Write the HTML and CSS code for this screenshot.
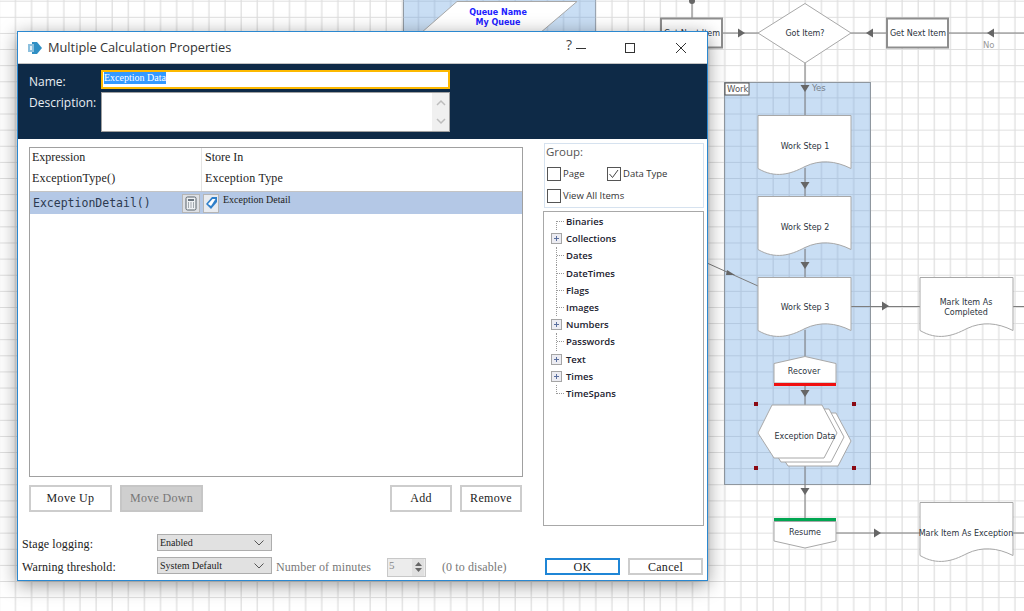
FILE: index.html
```html
<!DOCTYPE html>
<html lang="en">
  <head>
    <meta charset="UTF-8" />
    <title>Multiple Calculation Properties</title>
    <link rel="stylesheet" href="styles.css">
  </head>
  <body>
    <!-- flow diagram behind the dialog -->
    <svg class="canvas" width="1024" height="611" viewBox="0 0 1024 611">
      <defs>
        <pattern id="grid" width="16.12" height="16.12" x="3" y="0.7" patternUnits="userSpaceOnUse">
          <path class="grid-line" d="M12.5 0V16.12M0 0.3H16.12" />
        </pattern>
        <pattern id="gridblue" width="16.12" height="16.12" x="3" y="0.7" patternUnits="userSpaceOnUse">
          <path class="grid-line-blue" d="M12.5 0V16.12M0 0.3H16.12" />
        </pattern>
        <path id="doc" d="M0 0H93V53C77 45 62 44 47 51C32 59 17 63 0 53Z" />
        <path id="hex" d="M0 29L14 1H64L79 29L66 54H16Z" />
        <path id="adown" d="M-4.500 -4H4.500L0 3Z" />
        <path id="aright" d="M-3 -4.500L4 0L-3 4.500Z" />
        <path id="aleft" d="M3 -4.500L-4 0L3 4.500Z" />
      </defs>
      <rect width="1024" height="611" fill="#fff" />
      <rect width="1024" height="611" fill="url(#grid)" />

      <rect class="block" x="403.500" y="-2" width="192" height="36" />
      <rect x="403.500" y="-2" width="192" height="36" fill="url(#gridblue)" />
      <rect class="block" x="724.500" y="82.500" width="146" height="402" />
      <rect x="725" y="83" width="145" height="401" fill="url(#gridblue)" />

      <path class="link" d="M692 0V18M722 33H758M851 33H887M948 33H1024M805 63V115M805 168V196M805 249V277M805 330V356M707 263L758 286M851 306.500H920M1012 306.500H1024M805 386V405M805 466V518M836 533H920M1012 533H1024" />
      <circle class="arrow" cx="692" cy="1" r="3" />
      <use class="arrow" href="#aright" x="741" y="33" />
      <use class="arrow" href="#aleft" x="870" y="33" />
      <use class="arrow" href="#aleft" x="991" y="33" />
      <use class="arrow" href="#adown" x="805" y="89" />
      <use class="arrow" href="#adown" x="805" y="186" />
      <use class="arrow" href="#adown" x="805" y="266" />
      <use class="arrow" href="#adown" x="805" y="394" />
      <use class="arrow" href="#adown" x="805" y="492" />
      <use class="arrow" href="#aright" x="885" y="306" />
      <use class="arrow" href="#aright" x="877" y="533" />
      <path class="arrow" d="M727 270L735 275L726 275Z" />

      <path class="shape" d="M457 1.500H577L540 33H421Z" />
      <text class="queue" x="498" y="15">Queue Name</text>
      <text class="queue" x="498" y="25">My Queue</text>

      <rect class="box" x="661" y="18.500" width="61" height="29" />
      <text class="label" x="692" y="36">Get Next Item</text>
      <path class="shape" d="M758 33L805 3.500L851 33L805 63Z" />
      <text class="label" x="805" y="36">Got Item?</text>
      <rect class="box" x="887" y="18.500" width="61" height="29" />
      <text class="label" x="918" y="36">Get Next Item</text>
      <text class="note" x="983" y="48">No</text>
      <text class="note note-dark" x="812" y="91">Yes</text>

      <rect class="tag" x="725" y="83" width="24" height="12" />
      <text class="tag-text" x="727" y="92">Work</text>

      <use class="shape" href="#doc" x="758" y="115.500" />
      <text class="label" x="805" y="149">Work Step 1</text>
      <use class="shape" href="#doc" x="758" y="196.500" />
      <text class="label" x="805" y="230">Work Step 2</text>
      <use class="shape" href="#doc" x="758" y="277.500" />
      <text class="label" x="805" y="310">Work Step 3</text>
      <use class="shape" href="#doc" x="920" y="277.500" />
      <text class="label" x="966" y="305">Mark Item As</text>
      <text class="label" x="966" y="315">Completed</text>
      <use class="shape" href="#doc" x="920" y="502.500" />
      <text class="label" x="966" y="536">Mark Item As Exception</text>

      <path class="shape" d="M774 363.500L805 356.500L836 363.500V383H774Z" />
      <rect x="774" y="383" width="62" height="3" fill="#f01010" />
      <text class="label" x="804" y="374">Recover</text>

      <use class="shape" href="#hex" x="772" y="412" />
      <use class="shape" href="#hex" x="765" y="408" />
      <use class="shape" href="#hex" x="758" y="404" />
      <text class="label" x="805" y="439">Exception Data</text>
      <rect class="grip" x="754" y="402" width="4" height="4" />
      <rect class="grip" x="852" y="402" width="4" height="4" />
      <rect class="grip" x="754" y="466" width="4" height="4" />
      <rect class="grip" x="852" y="466" width="4" height="4" />

      <rect x="774" y="518" width="62" height="3" fill="#00a651" />
      <path class="shape" d="M774 521.500H836V541L805 548L774 541Z" />
      <text class="label" x="805" y="535">Resume</text>
    </svg>

    <div class="dialog">
      <div class="titlebar">
        <svg class="app-icon" width="16" height="14" viewBox="0 0 16 14">
          <path d="M5 1H10L15 7L10 13H5Z" fill="#2f8fc4" />
          <rect x="1" y="3" width="6" height="8" fill="#8cc0de" />
          <rect x="3" y="5" width="2" height="4" fill="#e4f0f7" />
        </svg>
        <span class="title">Multiple Calculation Properties</span>
        <span class="help">?</span>
        <svg class="winbtn btn-min" width="12" height="12" viewBox="0 0 12 12"><path d="M1 6.500H11" /></svg>
        <svg class="winbtn btn-max" width="12" height="12" viewBox="0 0 12 12"><rect x="1.500" y="1.500" width="9" height="9" /></svg>
        <svg class="winbtn btn-close" width="12" height="12" viewBox="0 0 12 12"><path d="M1 1L11 11M11 1L1 11" /></svg>
      </div>

      <div class="head">
        <label class="head-label name-label">Name:</label>
        <div class="name-input"><span class="selected">Exception Data</span></div>
        <label class="head-label">Description:</label>
        <div class="desc-input">
          <div class="desc-scroll">
            <svg width="12" height="8" viewBox="0 0 12 8"><path d="M2 6L6 2L10 6" /></svg>
            <svg width="12" height="8" viewBox="0 0 12 8"><path d="M2 2L6 6L10 2" /></svg>
          </div>
        </div>
      </div>

      <div class="body">
        <div class="left">
          <div class="table">
            <div class="row row-head">
              <div class="cell first">Expression</div>
              <div class="cell">Store In</div>
            </div>
            <div class="row">
              <div class="cell first spaced">ExceptionType()</div>
              <div class="cell spaced">Exception Type</div>
            </div>
            <div class="row row-selected">
              <div class="cell-expr">
                <span class="mono">ExceptionDetail()</span>
                <span class="cell-btn">
                  <svg width="12" height="15" viewBox="0 0 12 15">
                    <rect x="1" y="1" width="10" height="13" rx="1.500" fill="#eef1f4" stroke="#59626b" />
                    <rect x="3" y="3" width="6" height="2" fill="#6c7680" />
                    <path d="M3 7H4M5.500 7H6.500M8 7H9M3 9H4M5.500 9H6.500M8 9H9M3 11H4M5.500 11H6.500M8 11H9" stroke="#59626b" />
                  </svg>
                </span>
              </div>
              <div class="cell-store">
                <span class="cell-btn tag-btn">
                  <svg width="13" height="14" viewBox="0 0 13 14">
                    <path d="M1 8L7 1H12V6L6 13Z" fill="#2f7fc9" />
                    <path d="M3 8L7.500 3H10.500L6 10Z" fill="#fff" />
                  </svg>
                </span>
                <span class="store-text">Exception Detail</span>
              </div>
            </div>
          </div>
          <div class="actions">
            <button class="btn btn-move">Move Up</button>
            <button class="btn btn-move btn-off">Move Down</button>
            <button class="btn btn-add">Add</button>
            <button class="btn btn-add">Remove</button>
          </div>
        </div>

        <div class="right">
          <div class="group">
            <div class="group-title">Group:</div>
            <div class="group-row">
              <span class="check"></span><span class="check-text page">Page</span>
              <span class="check">
                <svg width="14" height="14" viewBox="0 0 14 14"><path d="M2.500 7L5.500 10.500L11 3" /></svg>
              </span><span class="check-text">Data Type</span>
            </div>
            <div class="group-row">
              <span class="check"></span><span class="check-text">View All Items</span>
            </div>
          </div>
          <div class="tree">
            <div class="node"><i class="twig"></i>Binaries</div>
            <div class="node"><i class="twig plus"></i>Collections</div>
            <div class="node"><i class="twig"></i>Dates</div>
            <div class="node"><i class="twig"></i>DateTimes</div>
            <div class="node"><i class="twig"></i>Flags</div>
            <div class="node"><i class="twig"></i>Images</div>
            <div class="node"><i class="twig plus"></i>Numbers</div>
            <div class="node"><i class="twig"></i>Passwords</div>
            <div class="node"><i class="twig plus"></i>Text</div>
            <div class="node"><i class="twig plus"></i>Times</div>
            <div class="node"><i class="twig last"></i>TimeSpans</div>
          </div>
        </div>
      </div>

      <div class="footer">
        <div class="foot-row">
          <span class="foot-label">Stage logging:</span>
          <div class="select">Enabled<svg width="12" height="8" viewBox="0 0 12 8"><path d="M1.500 1.500L6 6L10.500 1.500" /></svg></div>
        </div>
        <div class="foot-row">
          <span class="foot-label">Warning threshold:</span>
          <div class="select">System Default<svg width="12" height="8" viewBox="0 0 12 8"><path d="M1.500 1.500L6 6L10.500 1.500" /></svg></div>
          <span class="muted minutes">Number of minutes</span>
          <div class="spin">5
            <div class="spin-arrows">
              <svg width="9" height="6" viewBox="0 0 9 6"><path d="M1 5L4.500 1L8 5Z" /></svg>
              <svg width="9" height="6" viewBox="0 0 9 6"><path d="M1 1L4.500 5L8 1Z" /></svg>
            </div>
          </div>
          <span class="muted disable">(0 to disable)</span>
          <button class="btn btn-ok">OK</button>
          <button class="btn btn-cancel">Cancel</button>
        </div>
      </div>
    </div>
  </body>
</html>
```

FILE: styles.css
```css
body {
  margin: 0;
  width: 1024px;
  height: 611px;
  overflow: hidden;
  position: relative;
  background: #fff;
  font-family: "Liberation Serif", serif;
  font-size: 12px;
  color: #222;
}

/* canvas */
.canvas {
  position: absolute;
  left: 0;
  top: 0;
}
.grid-line {
  fill: none;
  stroke: #dedede;
  stroke-width: 1.2;
}
.grid-line-blue {
  fill: none;
  stroke: #b3c8df;
  stroke-width: 1.2;
}
.block {
  fill: #c9def4;
  stroke: #8f979f;
}
.link {
  fill: none;
  stroke: #7d7d7d;
  stroke-width: 1;
}
.arrow {
  fill: #666;
}
.shape {
  fill: #fff;
  stroke: #a8a8a8;
  stroke-width: 1;
}
.box {
  fill: #fff;
  stroke: #8e8e8e;
  stroke-width: 2;
}
.tag {
  fill: #fff;
  stroke: #555;
}
.tag-text {
  font: 8.5px "DejaVu Sans", sans-serif;
  fill: #555;
}
.label {
  font: 8px "DejaVu Sans", sans-serif;
  fill: #2c3440;
  text-anchor: middle;
}
.queue {
  font: bold 8px "DejaVu Sans", sans-serif;
  fill: #2222ff;
  text-anchor: middle;
}
.note {
  font: 8.500px "DejaVu Sans", sans-serif;
  fill: #9a9a9a;
}
.note-dark {
  fill: #77808a;
}
.grip {
  fill: #8b0a14;
}

/* dialog window */
.dialog {
  position: absolute;
  left: 17px;
  top: 31px;
  width: 689px;
  height: 548px;
  display: flex;
  flex-direction: column;
  background: #fff;
  border: 1px solid #2b88d0;
  box-shadow: 0 4px 18px rgba(0, 0, 0, 0.4);
}
.titlebar {
  display: flex;
  align-items: center;
  height: 31px;
  flex: none;
  padding-left: 9px;
}
.app-icon {
  margin-right: 5px;
}
.title {
  font: 12.800px "Open Sans", sans-serif;
  color: #333;
  flex: 1;
  margin-top: -2px;
}
.help {
  font: 14px "Open Sans", sans-serif;
  color: #444;
  margin-right: 3px;
  margin-top: -7px;
}
.winbtn {
  fill: none;
  stroke: #333;
}
.btn-min {
  margin-right: 37px;
}
.btn-max {
  margin-right: 39px;
}
.btn-close {
  margin-right: 20px;
}

.head {
  display: grid;
  grid-template-columns: 72px 349px;
  grid-template-rows: 19px 40px;
  row-gap: 3px;
  flex: none;
  height: 69px;
  padding: 6px 0 0 11px;
  background: #0e2a47;
  border-top: 1px solid #c4c4c4;
}
.head-label {
  font: 12px "Open Sans", sans-serif;
  color: #e8edf2;
  padding-top: 2px;
}
.name-label {
  padding-top: 3px;
}
.name-input {
  box-sizing: border-box;
  border: 2px solid #fdb900;
  background: #fff;
  padding-left: 1px;
  font-size: 10px;
  line-height: 12px;
}
.selected {
  display: inline-block;
  background: #3399ff;
  color: #fff;
  height: 12px;
}
.desc-input {
  box-sizing: border-box;
  display: flex;
  justify-content: flex-end;
  background: #fff;
  border: 1px solid #a0a0a0;
}
.desc-scroll {
  width: 17px;
  display: flex;
  flex-direction: column;
  align-items: center;
  justify-content: space-between;
  padding: 6px 0;
  background: #f0f0f0;
}
.desc-scroll svg {
  fill: none;
  stroke: #bdbdbd;
  stroke-width: 1.500;
}

.body {
  display: flex;
  gap: 20px;
  flex: none;
  height: 387px;
  padding: 4px 2px 0 11px;
  box-sizing: border-box;
}
.left {
  width: 494px;
  padding-top: 4px;
}
.table {
  box-sizing: border-box;
  height: 330px;
  border: 1px solid #a0a0a0;
}
.row {
  display: grid;
  grid-template-columns: 172px 1fr;
  height: 20px;
  align-items: center;
}
.row + .row {
  height: 23px;
}
.row + .row.row-selected {
  height: 22px;
}
.cell {
  padding-left: 3px;
  height: 100%;
  line-height: 20px;
}
.row-head .cell {
  line-height: 18px;
}
.first {
  border-right: 1px solid #e4e4e4;
  padding-left: 2px;
}
.spaced {
  letter-spacing: 0.2px;
}
.row-selected {
  background: #b4c8e6;
  border-top: 1px solid #c4c4c4;
}
.cell-expr {
  display: flex;
  align-items: center;
  justify-content: space-between;
  padding-left: 3px;
  padding-right: 2px;
}
.mono {
  font: 11.500px "DejaVu Sans Mono", monospace;
  color: #2c3a50;
}
.cell-store {
  display: flex;
  align-items: center;
}
.cell-btn {
  box-sizing: border-box;
  width: 18px;
  height: 19px;
  display: flex;
  align-items: center;
  justify-content: center;
  background: #dde0e5;
  border: 1px solid #b5b5b5;
}
.tag-btn {
  width: 16px;
  margin-left: 1px;
  background: #e8ebf0;
}
.store-text {
  font-size: 10px;
  margin-left: 4px;
  margin-top: -8px;
}
.actions {
  display: flex;
  margin-top: 8px;
}
.btn {
  box-sizing: border-box;
  padding: 0;
  font: 12px "Liberation Serif", serif;
  letter-spacing: 0.3px;
  color: #222;
  background: #fff;
  border: 2px solid #cdcdcd;
}
.btn-move {
  width: 83px;
  height: 27px;
  margin-right: 8px;
}
.btn-off {
  background: #cfcfcf;
  color: #777;
  border-color: #c6c6c6;
  margin-right: 187px;
}
.btn-add:last-child {
  margin-left: 8px;
}
.btn-add {
  width: 62px;
  height: 27px;
}

.right {
  width: 161px;
}
.group {
  box-sizing: border-box;
  height: 65px;
  margin-left: 1px;
  width: 160px;
  border: 1px solid #d6e2ef;
  padding: 0 0 0 2px;
}
.group-title {
  font: 11.500px "Open Sans", sans-serif;
  color: #555;
  height: 22px;
  line-height: 16px;
  margin-left: -1px;
}
.group-row {
  display: flex;
  align-items: center;
  height: 15px;
  margin-bottom: 7px;
}
.check {
  box-sizing: border-box;
  width: 14px;
  height: 14px;
  border: 1px solid #555;
  flex: none;
}
.check svg {
  display: block;
  margin: -1px;
  fill: none;
  stroke: #444;
}
.check-text {
  font: 9.500px "Open Sans", sans-serif;
  color: #333;
  margin-left: 2px;
}
.page {
  width: 44px;
}
.tree {
  box-sizing: border-box;
  height: 315px;
  margin-top: 3px;
  padding-top: 1px;
  border: 1px solid #a8a8a8;
  background: #fff;
}
.node {
  display: flex;
  align-items: center;
  height: 17.200px;
  font: 600 9.500px "Open Sans", sans-serif;
  color: #1b2230;
}
.twig {
  position: relative;
  display: block;
  flex: none;
  width: 22px;
  height: 100%;
}
.twig::before {
  content: "";
  position: absolute;
  left: 12px;
  top: 0;
  bottom: 0;
  border-left: 1px dotted #999;
}
.twig::after {
  content: "";
  position: absolute;
  left: 13px;
  width: 7px;
  top: 8px;
  border-top: 1px dotted #999;
}
.node:first-child .twig::before {
  top: 8px;
}
.last::before {
  bottom: 8px;
}
.plus {
  background:
    linear-gradient(#5a6f9e, #5a6f9e) 10px 8px / 5px 1px no-repeat,
    linear-gradient(#5a6f9e, #5a6f9e) 12px 6px / 1px 5px no-repeat,
    linear-gradient(#ececf2, #ececf2) 8px 4px / 9px 9px no-repeat;
}
.plus::before {
  display: none;
}
.plus::after {
  left: 7px;
  top: 3px;
  width: 9px;
  height: 9px;
  border: 1px solid #a5a5a5;
}

.footer {
  display: flex;
  flex-direction: column;
  gap: 6px;
  margin-top: 8px;
  padding-left: 4px;
}
.foot-row {
  display: flex;
  align-items: center;
  height: 17px;
}
.foot-label {
  width: 135px;
  letter-spacing: 0.1px;
  padding-top: 3px;
}
.select {
  box-sizing: border-box;
  width: 115px;
  height: 17px;
  display: flex;
  align-items: center;
  justify-content: space-between;
  padding: 0 6px 0 2px;
  font-size: 10px;
  background: #e1e1e1;
  border: 1px solid #adadad;
}
.select svg {
  fill: none;
  stroke: #555;
}
.muted {
  color: #777;
  letter-spacing: 0.1px;
  padding-top: 3px;
}
.minutes {
  width: 111px;
  margin-left: 4px;
  white-space: nowrap;
}
.spin {
  box-sizing: border-box;
  display: flex;
  justify-content: space-between;
  width: 39px;
  height: 19px;
  margin-top: 3px;
  padding-left: 1px;
  background: #ececec;
  border: 1px solid #c8c8c8;
  color: #888;
  font-size: 11px;
}
.spin-arrows {
  width: 12px;
  margin-right: 1px;
  display: flex;
  flex-direction: column;
  align-items: center;
  justify-content: center;
  background: #e0e0e0;
}
.spin-arrows svg {
  fill: #666;
}
.disable {
  margin-left: 16px;
  white-space: nowrap;
}
.btn-ok {
  width: 75px;
  height: 17px;
  margin-left: auto;
  margin-right: 8px;
  margin-top: 2px;
  border-color: #1f86d6;
  line-height: 12px;
}
.btn-cancel {
  width: 75px;
  height: 17px;
  margin-right: 4px;
  margin-top: 2px;
  line-height: 12px;
}
```
